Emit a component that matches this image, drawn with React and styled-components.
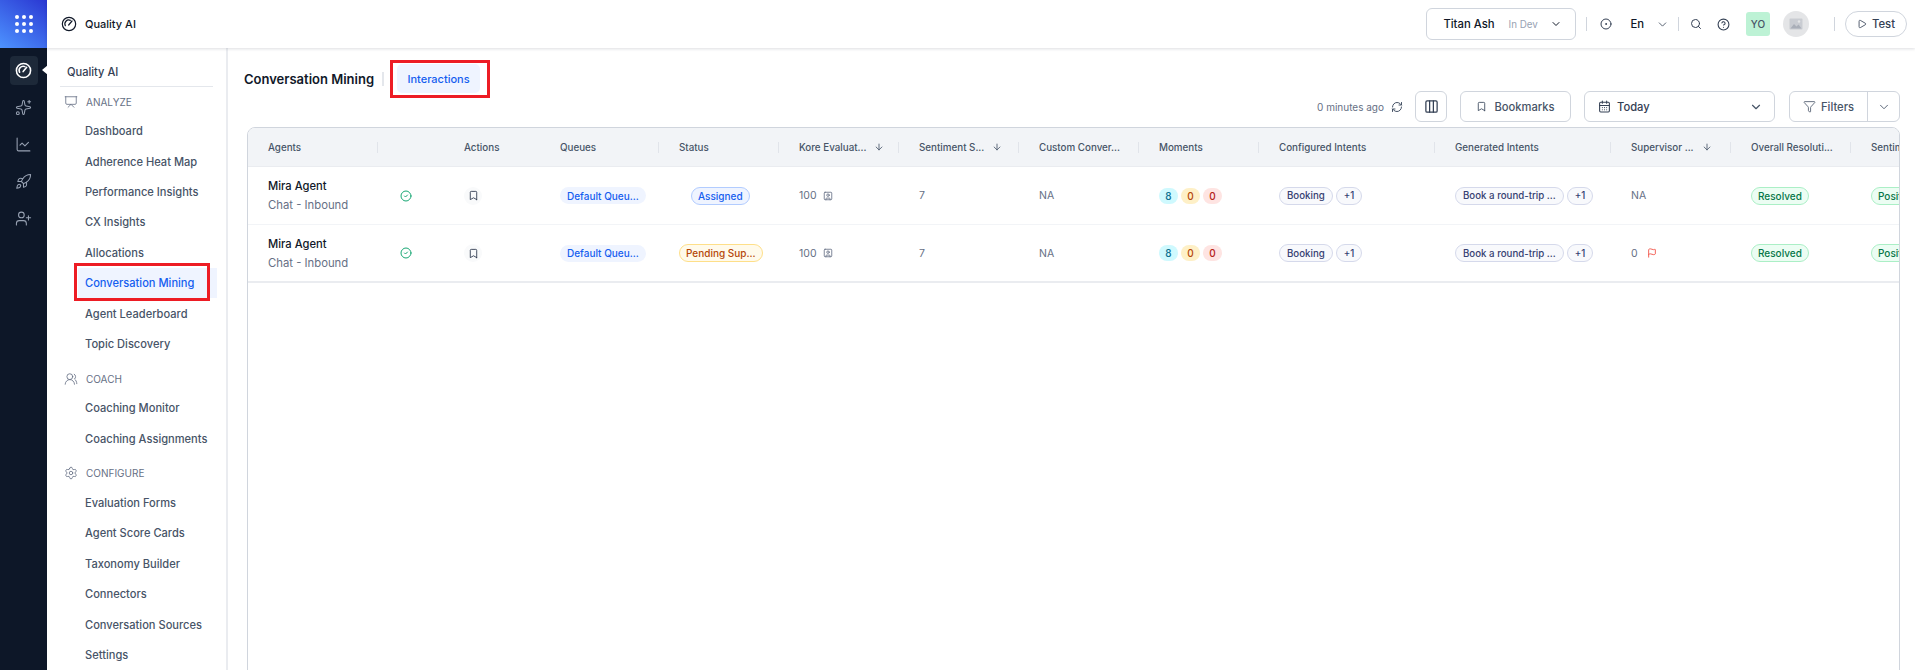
import React from "react";
import styled, { createGlobalStyle } from "styled-components";
import {
  ArrowDown,
  Bookmark,
  CalendarDays,
  ChartLine,
  ChevronDown,
  CircleCheck,
  CircleDot,
  CircleHelp,
  Columns3,
  Flag,
  Funnel,
  Play,
  Presentation,
  RefreshCw,
  Rocket,
  Search,
  Settings,
  Sparkles,
  SquareUser,
  UserPlus,
  UsersRound,
} from "lucide-react";

const GlobalStyle = createGlobalStyle`
  html, body {
    margin: 0;
    height: 100%;
    overflow: hidden;
    background: #fff;
    font-family: Inter, "Noto Sans", sans-serif;
  }
  * {
    box-sizing: border-box;
  }
`;

const Page = styled.div`
  display: flex;
  width: 1915px;
  height: 670px;
  overflow: hidden;
`;

const Rail = styled.nav`
  width: 47px;
  flex: none;
  background: #0d1728;
  display: flex;
  flex-direction: column;
`;

const Logo = styled.div`
  height: 48px;
  background: linear-gradient(35deg, #4d93ff 0%, #2a37d2 100%);
  display: grid;
  grid-template-columns: repeat(3, 4px);
  gap: 3px;
  place-content: center;
  span {
    width: 4px;
    height: 4px;
    border-radius: 50%;
    background: #fff;
  }
`;

const RailList = styled.div`
  display: flex;
  flex-direction: column;
  align-items: center;
  padding-top: 8px;
  gap: 8px;
`;

const RailItem = styled.div`
  position: relative;
  width: 28px;
  height: 29px;
  border-radius: 4px;
  display: flex;
  align-items: center;
  justify-content: center;
  background: ${(p) => (p.$active ? "#1d2939" : "transparent")};
  color: ${(p) => (p.$active ? "#fff" : "#98a2b3")};
  ${(p) =>
    p.$active &&
    `&::after {
      content: "";
      position: absolute;
      right: -10px;
      top: 9px;
      border-top: 5px solid transparent;
      border-bottom: 5px solid transparent;
      border-right: 6px solid #fff;
    }`}
`;

const Body = styled.div`
  flex: 1;
  min-width: 0;
  display: flex;
  flex-direction: column;
`;

const TopBar = styled.header`
  height: 48px;
  flex: none;
  display: flex;
  align-items: center;
  padding-left: 14px;
  background: #fff;
  box-shadow: 0 1px 3px rgba(16, 24, 40, 0.14);
  position: relative;
  z-index: 2;
`;

const AppName = styled.div`
  display: flex;
  align-items: center;
  gap: 8px;
  font-size: 11px;
  font-weight: 500;
  color: #101828;
`;

const TopActions = styled.div`
  margin-left: auto;
  display: flex;
  align-items: center;
  color: #344054;
  padding-right: 8px;
`;

const AccountBox = styled.div`
  width: 150px;
  height: 32px;
  border: 1px solid #d0d5dd;
  border-radius: 6px;
  display: flex;
  align-items: center;
  padding-left: 16px;
  font-size: 11.3px;
  font-weight: 500;
  color: #101828;
  svg {
    margin-left: 12px;
  }
`;

const DevTag = styled.span`
  font-size: 9.8px;
  font-weight: 400;
  color: #98a2b3;
  margin-left: 14px;
`;

const TopSep = styled.span`
  width: 1px;
  height: 14px;
  background: #d0d5dd;
  margin: ${(p) => p.$margin};
`;

const LangText = styled.span`
  font-size: 11.3px;
  font-weight: 500;
  color: #101828;
  margin: 0 12px 0 18px;
`;

const YoBadge = styled.div`
  width: 24px;
  height: 24px;
  margin-left: 16px;
  border-radius: 3px;
  background: #bdf2d5;
  color: #475467;
  font-size: 10px;
  font-weight: 500;
  display: flex;
  align-items: center;
  justify-content: center;
`;

const AvatarCircle = styled.div`
  width: 26px;
  height: 26px;
  margin-left: 13px;
  border-radius: 50%;
  background: #e4e5e7;
  color: #a9aeb8;
  display: flex;
  align-items: center;
  justify-content: center;
`;

const TestPill = styled.div`
  width: 62px;
  height: 26px;
  border: 1px solid #d0d5dd;
  border-radius: 13px;
  display: flex;
  align-items: center;
  justify-content: center;
  gap: 5px;
  font-size: 11.3px;
  font-weight: 500;
  color: #344054;
`;

const Columns = styled.div`
  flex: 1;
  display: flex;
  min-height: 0;
`;

const Sidebar = styled.aside`
  width: 181px;
  flex: none;
  border-right: 2px solid #eaecf0;
  padding: 11px 10px 0 13px;
  overflow: hidden;
`;

const SideTitle = styled.div`
  height: 28px;
  border-bottom: 1px solid #e4e7ec;
  padding-left: 7px;
  margin-right: 3px;
  font-size: 11.1px;
  font-weight: 500;
  color: #344054;
  line-height: 26px;
`;

const SectionHead = styled.div`
  height: 29px;
  margin-top: ${(p) => (p.$first ? "0" : "5px")};
  display: flex;
  align-items: center;
  gap: 8px;
  padding-left: 4px;
  font-size: 10px;
  color: #667085;
  svg {
    flex: none;
  }
`;

const NavItem = styled.div`
  position: relative;
  height: 30.4px;
  display: flex;
  align-items: center;
  padding-left: 7px;
  margin-left: 18px;
  width: 139px;
  font-size: 11.1px;
  font-weight: 500;
  white-space: nowrap;
  color: ${(p) => (p.$active ? "#155eef" : "#475467")};
  background: ${(p) => (p.$active ? "#eff4ff" : "transparent")};
  ${(p) =>
    p.$active &&
    `&::after {
      content: "";
      position: absolute;
      inset: -5px 7px -3px -4px;
      border: 3px solid #ed1c24;
    }`}
`;

const Content = styled.main`
  flex: 1;
  min-width: 0;
  display: flex;
  flex-direction: column;
  padding: 12px 15px 0 16px;
`;

const TitleRow = styled.div`
  display: flex;
  align-items: center;
  height: 38px;
`;

const PageTitle = styled.h1`
  margin: 0;
  font-size: 13px;
  font-weight: 600;
  color: #101828;
  line-height: 1;
`;

const TitleSep = styled.span`
  width: 2px;
  height: 14px;
  background: #e4e7ec;
  margin: 0 6px 0 8px;
`;

const RedBox = styled.div`
  border: 3px solid #ed1c24;
  padding: 1px 7px 2px 4px;
`;

const TabLabel = styled.div`
  width: 83px;
  height: 29px;
  border-radius: 5px;
  background: #eff4ff;
  color: #155eef;
  font-size: 11px;
  font-weight: 500;
  display: flex;
  align-items: center;
  justify-content: center;
`;

const ToolRow = styled.div`
  display: flex;
  align-items: center;
  justify-content: flex-end;
  height: 31px;
  margin-top: -7px;
`;

const UpdatedText = styled.span`
  font-size: 10px;
  color: #667085;
`;

const RefreshIcon = styled.span`
  display: flex;
  margin: 0 12px 0 7px;
  color: #475467;
`;

const ToolButton = styled.div`
  height: 31px;
  width: ${(p) => p.$w}px;
  margin-right: ${(p) => p.$mr || 0}px;
  border: 1px solid #d0d5dd;
  border-radius: 6px;
  display: flex;
  align-items: center;
  justify-content: ${(p) => (p.$between ? "space-between" : "center")};
  padding: ${(p) => (p.$between ? "0 11px 0 13px" : "0")};
  gap: 7px;
  font-size: 11.2px;
  font-weight: 500;
  color: #475467;
`;

const TodayLabel = styled.span`
  display: flex;
  align-items: center;
  gap: 6px;
  color: #344054;
`;

const SplitButton = styled.div`
  height: 31px;
  display: flex;
  border: 1px solid #d0d5dd;
  border-radius: 6px;
  font-size: 11.2px;
  font-weight: 500;
  color: #475467;
`;

const SplitPart = styled.div`
  width: ${(p) => p.$w}px;
  display: flex;
  align-items: center;
  justify-content: center;
  gap: 5px;
  & + & {
    border-left: 1px solid #d0d5dd;
  }
`;

const TableCard = styled.section`
  margin: 5px 0 -20px 3px;
  flex: 1;
  min-height: 0;
  border: 1px solid #d0d5dd;
  border-radius: 8px 8px 0 0;
  overflow: hidden;
`;

const gridColumns =
  "130px 66px 96px 119px 120px 120px 120px 120px 120px 176px 176px 120px 120px 48px";

const HeadRow = styled.div`
  display: grid;
  grid-template-columns: ${gridColumns};
  height: 39px;
  background: #f2f4f7;
  border-bottom: 1px solid #eaecf0;
`;

const HeadCell = styled.div`
  position: relative;
  display: flex;
  align-items: center;
  padding-left: 20px;
  font-size: 9.8px;
  font-weight: 500;
  color: #475467;
  white-space: nowrap;
  overflow: hidden;
  svg {
    margin-left: 8px;
    flex: none;
  }
  &::after {
    content: "";
    display: ${(p) => (p.$sep ? "block" : "none")};
    position: absolute;
    right: 0;
    top: 14px;
    height: 11px;
    width: 1px;
    background: #e1e4ea;
  }
`;

const Row = styled.div`
  display: grid;
  grid-template-columns: ${gridColumns};
  height: 58px;
  border-bottom: ${(p) => (p.$last ? "2px solid #eaecf0" : "1px solid #f2f4f7")};
`;

const Cell = styled.div`
  display: flex;
  align-items: center;
  gap: 3px;
  padding-left: 20px;
  font-size: 10.5px;
  color: #667085;
  white-space: nowrap;
  overflow: hidden;
`;

const AgentName = styled.div`
  font-size: 11.2px;
  font-weight: 500;
  color: #101828;
  line-height: 19px;
`;

const AgentSub = styled.div`
  font-size: 11.3px;
  color: #667085;
  line-height: 19px;
`;

const AgentCell = styled.div`
  display: flex;
  flex-direction: column;
  justify-content: center;
  padding: 1px 0 0 20px;
  white-space: nowrap;
`;

const IconCell = styled(Cell)`
  padding-left: ${(p) => p.$pad}px;
  color: ${(p) => p.$color};
`;

const IconDisc = styled.span`
  width: 18px;
  height: 18px;
  border-radius: 50%;
  background: #f9fafb;
  display: flex;
  align-items: center;
  justify-content: center;
`;

const Tag = styled.span`
  display: inline-flex;
  align-items: center;
  height: ${(p) => (p.$tall ? "18px" : "17px")};
  padding: 0 6px;
  border-radius: 9px;
  border: 1px solid ${(p) => p.$border || "transparent"};
  background: ${(p) => p.$bg};
  color: ${(p) => p.$color};
  font-size: 10px;
  font-weight: 500;
`;

const StatusCell = styled(Cell)`
  padding-left: ${(p) => p.$pad}px;
`;

const Moment = styled.span`
  width: 19px;
  height: 16px;
  border-radius: 8px;
  background: ${(p) => p.$bg};
  color: ${(p) => p.$color};
  font-size: 10px;
  font-weight: 500;
  display: flex;
  align-items: center;
  justify-content: center;
`;

const IntentTag = styled.span`
  display: inline-flex;
  align-items: center;
  height: 18px;
  padding: 0 7px;
  border-radius: 9px;
  border: 1px solid #d5d9eb;
  background: #f8f9fc;
  color: #363f72;
  font-size: 9.7px;
  font-weight: 500;
`;

const GaugeIcon = ({ size = 17, strokeWidth = 2 }) => (
  <svg
    width={size}
    height={size}
    viewBox="0 0 24 24"
    fill="none"
    stroke="currentColor"
    strokeWidth={strokeWidth}
    strokeLinecap="round"
  >
    <circle cx="12" cy="12" r="10" />
    <path d="M6.5 14.5a5.8 5.8 0 0 1 7.5-8" />
    <path d="M11.5 13.5l5-6" />
  </svg>
);

const PictureIcon = () => (
  <svg width="14" height="12" viewBox="0 0 14 12" fill="currentColor">
    <rect x="0.5" y="0.5" width="13" height="11" rx="1" opacity="0.45" />
    <path d="M1.5 10.5l3.5-4.5 2.5 2.5 2-2 3 4z" />
    <circle cx="10" cy="3.5" r="1.2" fill="#e4e5e7" />
  </svg>
);

const railIcons = [Sparkles, ChartLine, Rocket, UserPlus];

const sections = [
  {
    title: "ANALYZE",
    icon: Presentation,
    items: [
      "Dashboard",
      "Adherence Heat Map",
      "Performance Insights",
      "CX Insights",
      "Allocations",
      "Conversation Mining",
      "Agent Leaderboard",
      "Topic Discovery",
    ],
  },
  {
    title: "COACH",
    icon: UsersRound,
    items: ["Coaching Monitor", "Coaching Assignments"],
  },
  {
    title: "CONFIGURE",
    icon: Settings,
    items: [
      "Evaluation Forms",
      "Agent Score Cards",
      "Taxonomy Builder",
      "Connectors",
      "Conversation Sources",
      "Settings",
    ],
  },
];

const headers = [
  { label: "Agents", sep: true },
  { label: "" },
  { label: "Actions" },
  { label: "Queues", sep: true },
  { label: "Status", sep: true },
  { label: "Kore Evaluat...", sort: true, sep: true },
  { label: "Sentiment S...", sort: true, sep: true },
  { label: "Custom Conver...", sep: true },
  { label: "Moments", sep: true },
  { label: "Configured Intents", sep: true },
  { label: "Generated Intents", sep: true },
  { label: "Supervisor ...", sort: true, sep: true },
  { label: "Overall Resoluti...", sep: true },
  { label: "Sentiment" },
];

const rows = [
  {
    id: 1,
    status: "Assigned",
    statusPad: 32,
    statusBg: "#eff4ff",
    statusBorder: "#b2ccff",
    statusColor: "#155eef",
    supervisor: "NA",
    flagged: false,
  },
  {
    id: 2,
    status: "Pending Sup...",
    statusPad: 20,
    statusBg: "#fffaeb",
    statusBorder: "#fedf89",
    statusColor: "#b54708",
    supervisor: "0",
    flagged: true,
  },
];

export default function App() {
  return (
    <>
      <GlobalStyle />
      <Page>
        <Rail>
          <Logo>
            {Array.from({ length: 9 }).map((_, i) => (
              <span key={i} />
            ))}
          </Logo>
          <RailList>
            <RailItem $active>
              <GaugeIcon size={17} strokeWidth={2.2} />
            </RailItem>
            {railIcons.map((Icon, i) => (
              <RailItem key={i}>
                <Icon size={17} strokeWidth={1.5} />
              </RailItem>
            ))}
          </RailList>
        </Rail>
        <Body>
          <TopBar>
            <AppName>
              <GaugeIcon size={16} strokeWidth={1.8} />
              Quality AI
            </AppName>
            <TopActions>
              <AccountBox>
                Titan Ash
                <DevTag>In Dev</DevTag>
                <ChevronDown size={12} />
              </AccountBox>
              <TopSep $margin="0 13px 0 10px" />
              <CircleDot size={12} />
              <LangText>En</LangText>
              <ChevronDown size={13} strokeWidth={1.5} />
              <TopSep $margin="0 11px 0 9px" />
              <Search size={12} />
              <CircleHelp size={13} style={{ marginLeft: 15 }} />
              <YoBadge>YO</YoBadge>
              <AvatarCircle>
                <PictureIcon />
              </AvatarCircle>
              <TopSep $margin="0 10px 0 25px" />
              <TestPill>
                <Play size={10} />
                Test
              </TestPill>
            </TopActions>
          </TopBar>
          <Columns>
            <Sidebar>
              <SideTitle>Quality AI</SideTitle>
              {sections.map((section, i) => {
                const SectionIcon = section.icon;
                return (
                  <div key={section.title}>
                    <SectionHead $first={i === 0}>
                      <SectionIcon size={14} strokeWidth={1.4} />
                      {section.title}
                    </SectionHead>
                    {section.items.map((item) => (
                      <NavItem key={item} $active={item === "Conversation Mining"}>
                        {item}
                      </NavItem>
                    ))}
                  </div>
                );
              })}
            </Sidebar>
            <Content>
              <TitleRow>
                <PageTitle>Conversation Mining</PageTitle>
                <TitleSep />
                <RedBox>
                  <TabLabel>Interactions</TabLabel>
                </RedBox>
              </TitleRow>
              <ToolRow>
                <UpdatedText>0 minutes ago</UpdatedText>
                <RefreshIcon>
                  <RefreshCw size={12} />
                </RefreshIcon>
                <ToolButton $w={32} $mr={13}>
                  <Columns3 size={15} color="#344054" />
                </ToolButton>
                <ToolButton $w={111} $mr={13}>
                  <Bookmark size={11} />
                  Bookmarks
                </ToolButton>
                <ToolButton $w={191} $mr={14} $between>
                  <TodayLabel>
                    <CalendarDays size={13} />
                    Today
                  </TodayLabel>
                  <ChevronDown size={14} />
                </ToolButton>
                <SplitButton>
                  <SplitPart $w={77}>
                    <Funnel size={13} strokeWidth={1.5} />
                    Filters
                  </SplitPart>
                  <SplitPart $w={32}>
                    <ChevronDown size={14} strokeWidth={1.5} />
                  </SplitPart>
                </SplitButton>
              </ToolRow>
              <TableCard>
                <HeadRow>
                  {headers.map((h, i) => (
                    <HeadCell key={i} $sep={h.sep}>
                      {h.label}
                      {h.sort && <ArrowDown size={10} />}
                    </HeadCell>
                  ))}
                </HeadRow>
                {rows.map((row, idx) => (
                  <Row key={row.id} $last={idx === rows.length - 1}>
                    <AgentCell>
                      <AgentName>Mira Agent</AgentName>
                      <AgentSub>Chat - Inbound</AgentSub>
                    </AgentCell>
                    <IconCell $pad={22} $color="#17a673">
                      <CircleCheck size={12} />
                    </IconCell>
                    <IconCell $pad={20} $color="#344054">
                      <IconDisc>
                        <Bookmark size={11} strokeWidth={2} />
                      </IconDisc>
                    </IconCell>
                    <Cell>
                      <Tag $bg="#eff4ff" $color="#155eef">
                        Default Queu...
                      </Tag>
                    </Cell>
                    <StatusCell $pad={row.statusPad}>
                      <Tag
                        $tall
                        $bg={row.statusBg}
                        $border={row.statusBorder}
                        $color={row.statusColor}
                      >
                        {row.status}
                      </Tag>
                    </StatusCell>
                    <Cell>
                      100 <SquareUser size={10} style={{ marginLeft: 3 }} />
                    </Cell>
                    <Cell>7</Cell>
                    <Cell>NA</Cell>
                    <Cell>
                      <Moment $bg="#cff9fe" $color="#0e7090">
                        8
                      </Moment>
                      <Moment $bg="#fef0c7" $color="#b54708">
                        0
                      </Moment>
                      <Moment $bg="#fee4e2" $color="#b42318">
                        0
                      </Moment>
                    </Cell>
                    <Cell>
                      <IntentTag>Booking</IntentTag>
                      <IntentTag>+1</IntentTag>
                    </Cell>
                    <Cell>
                      <IntentTag>Book a round-trip ...</IntentTag>
                      <IntentTag>+1</IntentTag>
                    </Cell>
                    <Cell>
                      {row.supervisor}
                      {row.flagged && (
                        <Flag size={10} color="#f04438" style={{ marginLeft: 6 }} />
                      )}
                    </Cell>
                    <Cell>
                      <Tag $tall $bg="#ecfdf3" $border="#abefc6" $color="#067647">
                        Resolved
                      </Tag>
                    </Cell>
                    <Cell>
                      <Tag $tall $bg="#ecfdf3" $border="#abefc6" $color="#067647">
                        Positive
                      </Tag>
                    </Cell>
                  </Row>
                ))}
              </TableCard>
            </Content>
          </Columns>
        </Body>
      </Page>
    </>
  );
}
